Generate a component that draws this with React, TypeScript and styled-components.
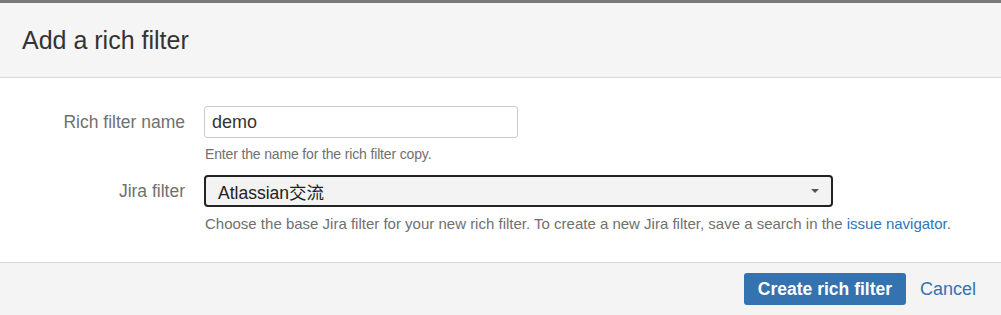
import React from "react";
import styled, { createGlobalStyle } from "styled-components";

const GlobalStyle = createGlobalStyle`
  html, body {
    margin: 0;
    padding: 0;
    background: #7a7a7a;
    font-family: "Liberation Sans", Arial, "Noto Sans CJK SC", sans-serif;
  }
`;

const Dialog = styled.div`
  margin-top: 3px;
  width: 1001px;
  background: #fff;
  display: flex;
  flex-direction: column;
`;

const Header = styled.header`
  height: 74px;
  background: #f5f5f5;
  border-bottom: 1px solid #d9d9d9;
  display: flex;
  align-items: center;
  padding-left: 22px;
`;

const Title = styled.h2`
  margin: 0;
  font-size: 25px;
  font-weight: 400;
  color: #333;
`;

const Body = styled.div`
  padding: 28px 0 28px;
  display: flex;
  flex-direction: column;
  gap: 11px;
`;

const Row = styled.div`
  display: grid;
  grid-template-columns: 185px 1fr;
  column-gap: 19px;
  align-items: start;
`;

const Label = styled.label`
  text-align: right;
  font-size: 17.5px;
  color: #707070;
  line-height: 32px;
  white-space: nowrap;
`;

const Field = styled.div`
  display: flex;
  flex-direction: column;
`;

const TextInput = styled.input`
  box-sizing: border-box;
  width: 314px;
  height: 32px;
  border: 1px solid #ccc;
  border-radius: 3px;
  padding: 0 7px;
  font-family: inherit;
  font-size: 18px;
  color: #333;
  outline: none;
`;

const Select = styled.div`
  box-sizing: border-box;
  width: 629px;
  height: 32px;
  border: 2px solid #222;
  border-radius: 4px;
  background: #f3f3f3;
  display: flex;
  align-items: center;
  justify-content: space-between;
  padding: 0 12px 0 12px;
  font-size: 17.5px;
  color: #222;
`;

const Caret = styled.span`
  width: 0;
  height: 0;
  border-left: 4px solid transparent;
  border-right: 4px solid transparent;
  border-top: 4px solid #555;
`;

const Help = styled.div<{ $size: number; $gap: number; $spacing?: number }>`
  margin-top: ${(p) => p.$gap}px;
  font-size: ${(p) => p.$size}px;
  letter-spacing: ${(p) => p.$spacing ?? 0}px;
  line-height: 20px;
  color: #707070;
  padding-left: 1px;
  white-space: nowrap;
`;

const Link = styled.a`
  color: #3572b0;
  text-decoration: none;
`;

const Footer = styled.footer`
  height: 52px;
  background: #f4f4f4;
  border-top: 1px solid #d5d5d5;
  display: flex;
  align-items: center;
  justify-content: flex-end;
  padding-right: 25px;
  gap: 14px;
`;

const PrimaryButton = styled.button`
  height: 32px;
  width: 162px;
  padding: 0;
  border: none;
  border-radius: 3px;
  background: #3572b0;
  color: #fff;
  font-family: inherit;
  font-size: 17.5px;
  font-weight: 700;
`;

const CancelLink = styled.a`
  color: #3572b0;
  font-size: 18px;
  text-decoration: none;
`;

export default function App() {
  return (
    <>
      <GlobalStyle />
      <Dialog>
        <Header>
          <Title>Add a rich filter</Title>
        </Header>
        <Body>
          <Row>
            <Label>Rich filter name</Label>
            <Field>
              <TextInput defaultValue="demo" />
              <Help $size={14} $gap={6} $spacing={-0.15}>
                Enter the name for the rich filter copy.
              </Help>
            </Field>
          </Row>
          <Row>
            <Label>Jira filter</Label>
            <Field>
              <Select>
                <span>Atlassian交流</span>
                <Caret />
              </Select>
              <Help $size={15} $gap={7}>
                Choose the base Jira filter for your new rich filter. To create a new Jira filter, save a search in the{" "}
                <Link href="#">issue navigator</Link>.
              </Help>
            </Field>
          </Row>
        </Body>
        <Footer>
          <PrimaryButton>Create rich filter</PrimaryButton>
          <CancelLink href="#">Cancel</CancelLink>
        </Footer>
      </Dialog>
    </>
  );
}
